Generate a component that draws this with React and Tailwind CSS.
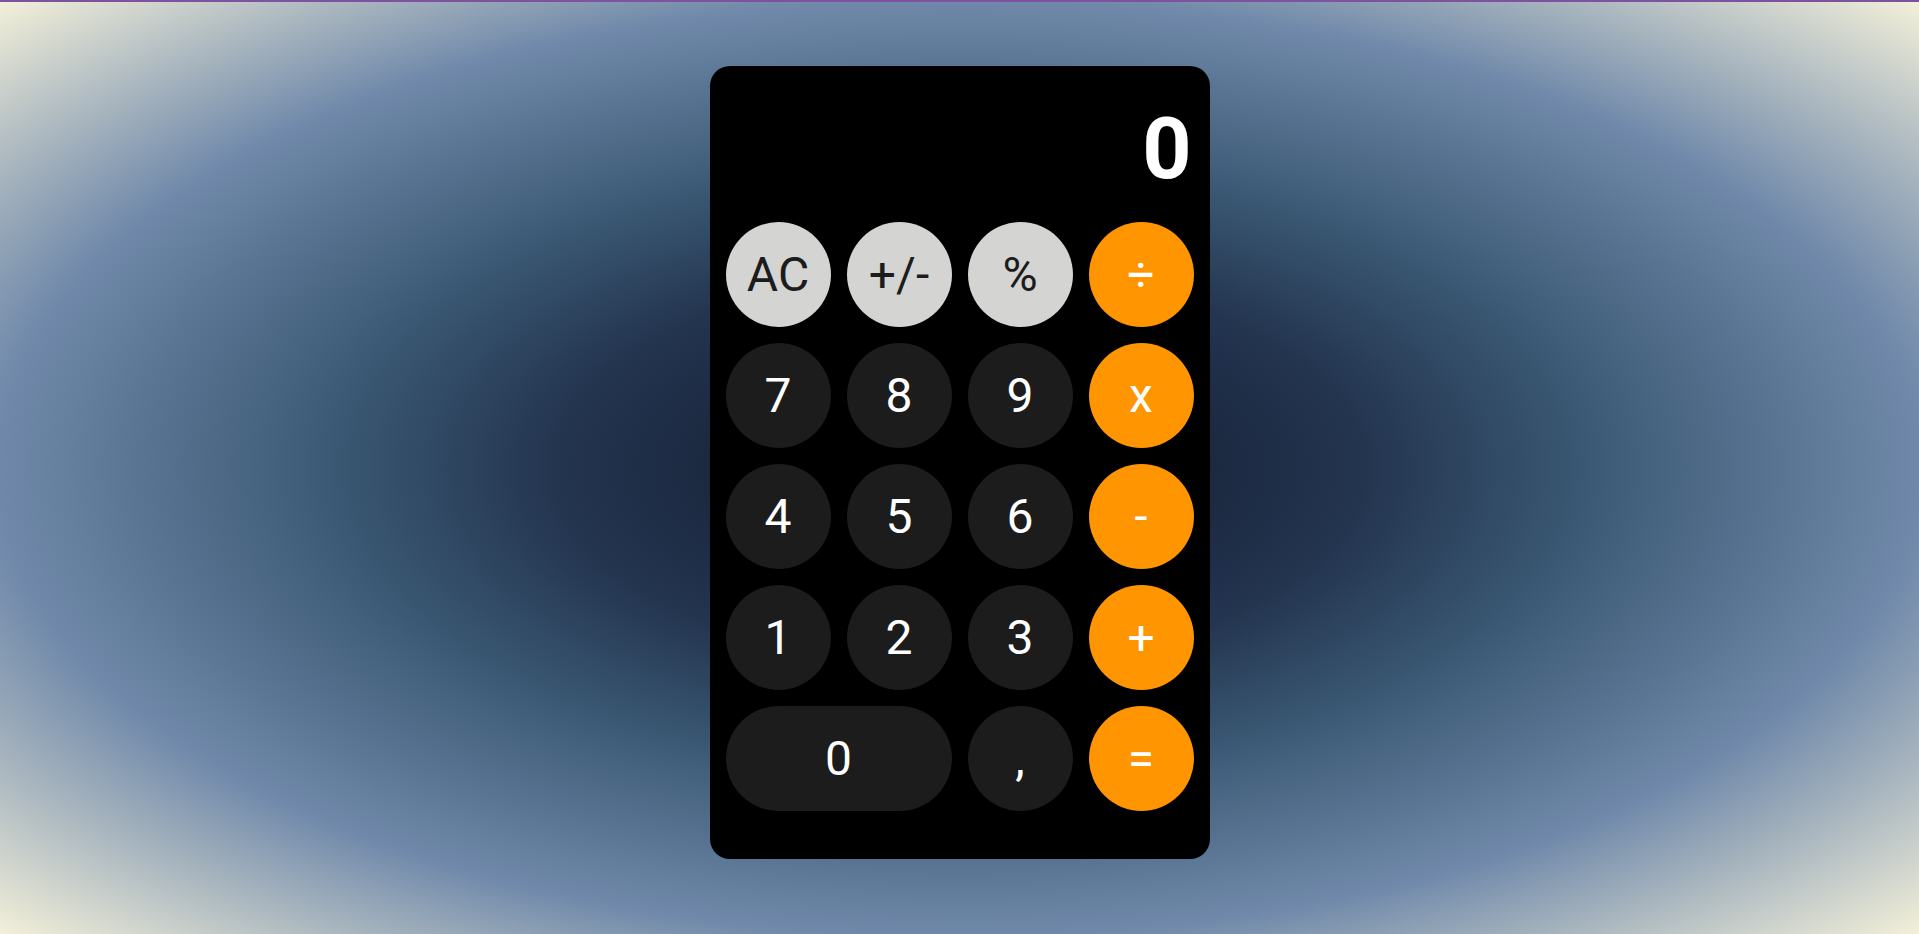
import { useState } from 'react';

// key layout, row by row — kind decides the colours
const KEYS = [
  { label: 'AC', kind: 'fn' },
  { label: '+/-', kind: 'fn' },
  { label: '%', kind: 'fn' },
  { label: '÷', kind: 'op' },
  { label: '7', kind: 'num' },
  { label: '8', kind: 'num' },
  { label: '9', kind: 'num' },
  { label: 'x', kind: 'op' },
  { label: '4', kind: 'num' },
  { label: '5', kind: 'num' },
  { label: '6', kind: 'num' },
  { label: '-', kind: 'op' },
  { label: '1', kind: 'num' },
  { label: '2', kind: 'num' },
  { label: '3', kind: 'num' },
  { label: '+', kind: 'op' },
  { label: '0', kind: 'num', wide: true },
  { label: ',', kind: 'num' },
  { label: '=', kind: 'op' },
];

const kindClass = {
  fn: 'bg-[#d4d4d2] text-[#1c1c1c]',
  num: 'bg-[#1c1c1c] text-white',
  op: 'bg-[#ff9500] text-white',
};

function Key({ k, onPress }) {
  return (
    <button
      onClick={() => onPress(k.label)}
      className={`h-[105px] rounded-full flex items-center justify-center text-[48px] leading-none font-normal ${
        kindClass[k.kind]
      } ${k.wide ? 'col-span-2' : ''}`}
    >
      {k.label}
    </button>
  );
}

export default function App() {
  const [display, setDisplay] = useState('0');

  const press = (label) => {
    if (label === 'AC') return setDisplay('0');
    if (/^[0-9]$/.test(label)) {
      setDisplay((d) => (d === '0' ? label : d + label));
    }
  };

  return (
    <div className="h-screen w-full border-t-2 border-[#7d539f] bg-[radial-gradient(ellipse_at_center,#19253c_15%,#243550_30%,#3a5873_46%,#7089aa_71%,#f3f0da_100%)] font-[Roboto,sans-serif]">
      <div className="mx-auto mt-[64px] w-[500px] rounded-[20px] bg-black px-4 pt-4 pb-12">
        {/* ---- Display ---- */}
        <div className="h-[124px] flex items-end justify-end pr-[2px] pb-[14px] mb-4">
          <span className="text-white font-bold text-[86px] leading-none">
            {display}
          </span>
        </div>

        {/* ---- Keypad ---- */}
        <div className="grid grid-cols-4 gap-4">
          {KEYS.map((k) => (
            <Key key={k.label} k={k} onPress={press} />
          ))}
        </div>
      </div>
    </div>
  );
}
